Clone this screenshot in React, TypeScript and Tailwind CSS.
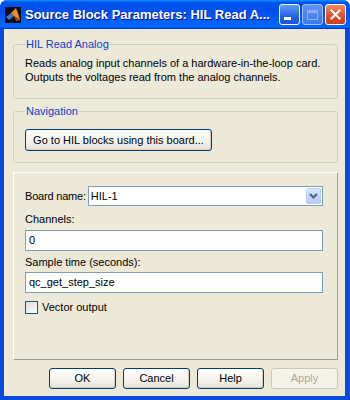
import React from 'react';

const XpButton: React.FC<{ label: string; disabled?: boolean; className?: string }> = ({ label, disabled, className }) => (
  <button
    className={`${className ?? ''} rounded-[3px] border text-[11px] leading-none ${
      disabled
        ? 'border-[#C9C7BA] bg-[#F5F4EA] text-[#ACA899]'
        : 'border-[#003C74] bg-[linear-gradient(180deg,#ffffff,#f3f2ec_60%,#e3e1d6)] text-black shadow-[inset_-1px_-1px_0_#d6d0c5]'
    }`}
  >
    {label}
  </button>
);

const MatlabIcon = () => (
  <svg width="16" height="16" viewBox="0 0 16 16">
    <rect width="16" height="16" fill="#0c0c1c" />
    <polygon points="1,10 6,6 9,9 4,13" fill="#3f78d8" />
    <polygon points="6,6 11,1 15,13 9,9" fill="#f08a2c" />
    <polygon points="9,9 15,13 11,14" fill="#b8400e" />
    <polygon points="11,1 13,6 15,13" fill="#ffb05a" />
  </svg>
);

export default function App() {
  return (
    <div className="w-[350px] h-[400px] flex flex-col overflow-hidden rounded-t-[7px] bg-[#0A4BDD] font-['Liberation_Sans',Arial,sans-serif]">
      {/* title bar */}
      <div className="h-[29px] shrink-0 flex items-center pl-[5px] pr-[4px] bg-[linear-gradient(180deg,#0997ff,#0053ee_8%,#0050ee_40%,#0066ff_88%,#0066ff_93%,#005bff_95%,#003dd7_96%,#003dd7)]">
        <MatlabIcon />
        <span className="ml-[4px] text-[13px] font-bold text-white [text-shadow:1px_1px_#0f1089]">
          Source Block Parameters: HIL Read A...
        </span>
        <div className="ml-auto flex gap-[2px]">
          <div className="w-[21px] h-[21px] rounded-[3px] border border-white bg-[linear-gradient(180deg,#5d9af8,#2663e0_60%,#1d55d4)] flex items-end pl-[4px] pb-[4px]">
            <div className="w-[7px] h-[3px] bg-white" />
          </div>
          <div className="w-[21px] h-[21px] rounded-[3px] border border-[#c9d8f9] bg-[linear-gradient(180deg,#7aa5f3,#4a7fe6)] flex items-center justify-center opacity-80">
            <div className="w-[11px] h-[10px] border border-[#a9c3f5] border-t-[3px]" />
          </div>
          <div className="w-[21px] h-[21px] rounded-[3px] border border-white bg-[linear-gradient(180deg,#f08a60,#e0502a_55%,#c9401a)] flex items-center justify-center">
            <svg width="11" height="11" viewBox="0 0 11 11">
              <path d="M1.5 1.5 L9.5 9.5 M9.5 1.5 L1.5 9.5" stroke="white" strokeWidth="2" strokeLinecap="square" />
            </svg>
          </div>
        </div>
      </div>

      {/* dialog body */}
      <div className="flex-1 ml-[4px] mr-[5px] mb-[4px] bg-[#ECE9D8] flex flex-col pl-[9px] pr-[7px] pb-[7px] text-[11px] text-black">
        <fieldset className="mt-[9px] border border-[#D0D0BF] rounded-[3px] pl-[11px] pr-[8px] pt-[5px] pb-[14px]">
          <legend className="px-[1px] leading-[13px] text-[#0B3FCC]">HIL Read Analog</legend>
          <p className="leading-[14px]">
            Reads analog input channels of a hardware-in-the-loop card.
            <br />
            Outputs the voltages read from the analog channels.
          </p>
        </fieldset>

        <fieldset className="mt-[6px] border border-[#D0D0BF] rounded-[3px] pl-[11px] pr-[8px] pt-[11px] pb-[11px]">
          <legend className="px-[1px] leading-[13px] text-[#0B3FCC]">Navigation</legend>
          <XpButton label="Go to HIL blocks using this board..." className="w-[187px] h-[22px]" />
        </fieldset>

        <div className="mt-[9px] flex-1 border border-t-white border-l-white border-r-[#9D9D92] border-b-[#9D9D92] pt-[13px] pl-[11px] pr-[14px]">
          <div className="flex items-center gap-[2px]">
            <span className="leading-[14px] tracking-[-0.2px]">Board name:</span>
            <div className="flex-1 h-[20px] border border-[#7F9DB9] bg-white flex items-center">
              <span className="flex-1 pl-[2px]">HIL-1</span>
              <div className="w-[15px] h-[16px] mr-[1px] rounded-[2px] border border-[#b9cdf6] bg-[linear-gradient(180deg,#d8e4fc,#b6cbf7)] flex items-center justify-center">
                <svg width="9" height="6" viewBox="0 0 9 6">
                  <path d="M1 1 L4.5 4.5 L8 1" fill="none" stroke="#4d6185" strokeWidth="2" />
                </svg>
              </div>
            </div>
          </div>

          <div className="mt-[6px] leading-[14px]">Channels:</div>
          <div className="mt-[4px] h-[21px] border border-[#7F9DB9] bg-white flex items-center pl-[3px]">0</div>

          <div className="mt-[4px] leading-[14px]">Sample time (seconds):</div>
          <div className="mt-[3px] h-[21px] border border-[#7F9DB9] bg-white flex items-center pl-[3px]">qc_get_step_size</div>

          <div className="mt-[7px] flex items-center gap-[4px]">
            <div className="w-[13px] h-[13px] border border-[#1C5180] bg-[linear-gradient(135deg,#dcdcd7,#ffffff)]" />
            <span className="leading-[14px]">Vector output</span>
          </div>
        </div>

        <div className="mt-[8px] flex justify-end gap-[7px]">
          <XpButton label="OK" className="w-[67px] h-[21px]" />
          <XpButton label="Cancel" className="w-[67px] h-[21px]" />
          <XpButton label="Help" className="w-[67px] h-[21px]" />
          <XpButton label="Apply" disabled className="w-[67px] h-[21px]" />
        </div>
      </div>
    </div>
  );
}
